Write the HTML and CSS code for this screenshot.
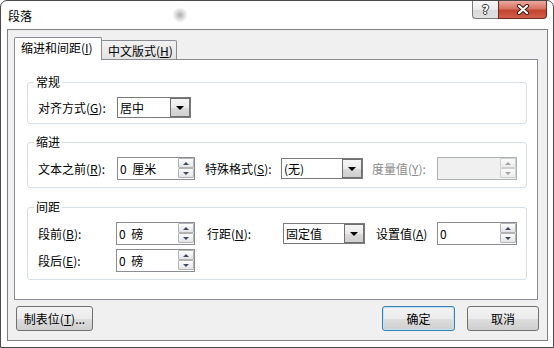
FILE: index.html
```html
<!DOCTYPE html>
<html lang="zh-CN">
<head>
<meta charset="utf-8">
<title>段落</title>
<link rel="stylesheet" href="styles.css">
</head>
<body>
<div class="window">
  <div class="titlebar">
    <span class="title">段落</span>
    <span class="smudge"></span>
    <div class="caption">
      <div class="cbtn help"><span class="qmark">?</span></div>
      <div class="cbtn close">
        <svg width="14" height="11" viewBox="0 0 14 11">
          <path d="M3 2 L11 9 M11 2 L3 9" stroke="#3f1a15" stroke-width="4.2" stroke-linecap="round" fill="none"/>
          <path d="M3 2 L11 9 M11 2 L3 9" stroke="#ffffff" stroke-width="2.2" stroke-linecap="round" fill="none"/>
        </svg>
      </div>
    </div>
  </div>
  <div class="client">
    <div class="tabs">
      <div class="tab sel">缩进和间距(<u>I</u>)</div>
      <div class="tab other">中文版式(<u>H</u>)</div>
    </div>
    <div class="page">
      <fieldset class="group g1">
        <legend>常规</legend>
        <div class="row">
          <span class="lbl w79">对齐方式(<u>G</u>):</span>
          <div class="combo w74"><span class="val">居中</span><span class="drop"><i></i></span></div>
        </div>
      </fieldset>
      <fieldset class="group g2">
        <legend>缩进</legend>
        <div class="row">
          <span class="lbl w79">文本之前(<u>R</u>):</span>
          <div class="spin w78"><span class="val">0 厘米</span><span class="spinbtns"><span class="sb up"><i></i></span><span class="sb down"><i></i></span></span></div>
          <span class="lbl w76 ml10">特殊格式(<u>S</u>):</span>
          <div class="combo w82"><span class="val">(无)</span><span class="drop"><i></i></span></div>
          <span class="lbl w65 ml9 dis">度量值(<u>Y</u>):</span>
          <div class="spin w80 disabled"><span class="val"></span><span class="spinbtns"><span class="sb up"><i></i></span><span class="sb down"><i></i></span></span></div>
        </div>
      </fieldset>
      <fieldset class="group g3">
        <legend>间距</legend>
        <div class="row">
          <span class="lbl w78">段前(<u>B</u>):</span>
          <div class="spin w79"><span class="val">0 磅</span><span class="spinbtns"><span class="sb up"><i></i></span><span class="sb down"><i></i></span></span></div>
          <span class="lbl w76 ml12">行距(<u>N</u>):</span>
          <div class="combo w82"><span class="val">固定值</span><span class="drop"><i></i></span></div>
          <span class="lbl w61 ml11">设置值(<u>A</u>)</span>
          <div class="spin w80"><span class="val">0</span><span class="spinbtns"><span class="sb up"><i></i></span><span class="sb down"><i></i></span></span></div>
        </div>
        <div class="row">
          <span class="lbl w78">段后(<u>E</u>):</span>
          <div class="spin w79"><span class="val">0 磅</span><span class="spinbtns"><span class="sb up"><i></i></span><span class="sb down"><i></i></span></span></div>
        </div>
      </fieldset>
    </div>
    <div class="buttons">
      <button class="btn tabstops">制表位(<u>T</u>)...</button>
      <button class="btn ok">确定</button>
      <button class="btn cancel">取消</button>
    </div>
  </div>
</div>
</body>
</html>
```
FILE: styles.css
```css
* { box-sizing: border-box; }
html, body { margin: 0; padding: 0; }
body {
  width: 554px;
  height: 348px;
  overflow: hidden;
  background: #ffffff;
  font-family: "Noto Sans CJK SC", "Microsoft YaHei", sans-serif;
  font-size: 12px;
  color: #000;
}
u { text-underline-offset: 1px; }

.window {
  width: 554px;
  height: 348px;
  border: 1px solid #4a4a4a;
  border-radius: 7px 7px 0 0;
  background: #ffffff;
  padding: 0 5px 6px 6px;
  display: flex;
  flex-direction: column;
}

.titlebar {
  height: 28px;
  flex: none;
  display: flex;
  align-items: center;
  position: relative;
  padding-left: 1px;
}
.title { line-height: 16px; margin-top: 1px; }
.smudge {
  position: absolute;
  left: 165px;
  top: 6px;
  width: 16px;
  height: 16px;
  border-radius: 50%;
  background: radial-gradient(circle, rgba(105,105,105,0.55) 0, rgba(150,150,150,0.25) 45%, rgba(255,255,255,0) 70%);
}
.caption {
  margin-left: auto;
  margin-right: 1px;
  align-self: flex-start;
  display: flex;
}
.cbtn {
  height: 18px;
  display: flex;
  align-items: center;
  justify-content: center;
}
.help {
  width: 26px;
  border: 1px solid #7b7b7b;
  border-top: none;
  border-right: none;
  border-radius: 0 0 0 4px;
  background: linear-gradient(#f8f8f8, #ececec 50%, #d9d9d9 52%, #e0e0e0);
}
.qmark {
  font-family: "DejaVu Sans", sans-serif;
  font-weight: bold;
  font-size: 12px;
  line-height: 14px;
  color: #fff;
  text-shadow: 1px 0 #333, -1px 0 #333, 0 1px #333, 0 -1px #333;
}
.close {
  width: 49px;
  border: 1px solid #6a2a22;
  border-top: none;
  border-radius: 0 0 4px 0;
  background: linear-gradient(#eaa99f, #d87363 45%, #c4432f 56%, #d2604b);
}

.client {
  flex: 1;
  border: 1px solid #7f7f7f;
  background: #f0f0f0;
  padding: 7px 9px 9px 6px;
  display: flex;
  flex-direction: column;
}

.tabs {
  height: 22px;
  flex: none;
  display: flex;
  align-items: flex-end;
}
.tab {
  border: 1px solid #898c95;
  border-bottom: none;
  border-radius: 2px 2px 0 0;
  padding: 0 0 0 6px;
  white-space: nowrap;
}
.tab.sel {
  width: 88px;
  height: 23px;
  margin-bottom: -1px;
  background: #ffffff;
  line-height: 20px;
  position: relative;
  z-index: 1;
}
.tab.other {
  width: 76px;
  height: 19px;
  margin-left: -1px;
  background: linear-gradient(#f2f2f2, #e3e3e3);
  line-height: 17px;
  padding-top: 1px;
}

.page {
  flex: 1;
  border: 1px solid #898c95;
  background: #ffffff;
  padding: 0 10px 0 12px;
  display: flex;
  flex-direction: column;
}

.group {
  margin: 0;
  min-width: 0;
  border: 1px solid #d5dfe5;
  border-radius: 3px;
  padding: 7px 6px 5px 10px;
}
.group legend {
  padding: 0 2px;
  margin-left: -4px;
  line-height: 16px;
}
.g1 { margin-top: 14px; }
.g2 { margin-top: 10px; padding-bottom: 7px; }
.g3 { margin-top: 11px; padding-bottom: 7px; }

.row { display: flex; align-items: center; }
.row + .row { margin-top: 4px; }
.lbl { white-space: nowrap; line-height: 16px; flex: none; }
.lbl.dis { color: #8a8a8a; }

.w61 { width: 61px; }
.w65 { width: 65px; }
.w74 { width: 74px; }
.w76 { width: 76px; }
.w78 { width: 78px; }
.w79 { width: 79px; }
.w80 { width: 80px; }
.w82 { width: 82px; }
.ml9 { margin-left: 9px; }
.ml10 { margin-left: 10px; }
.ml11 { margin-left: 11px; }
.ml12 { margin-left: 12px; }

.combo {
  flex: none;
  height: 21px;
  display: flex;
  border: 1px solid #7a7a7a;
  background: #ffffff;
}
.combo .val { flex: 1; padding-left: 2px; line-height: 19px; white-space: nowrap; }
.drop {
  width: 20px;
  border: 1px solid #707070;
  background: linear-gradient(#f5f5f5, #ebebeb 50%, #dadada 52%, #cfcfcf);
  display: flex;
  align-items: center;
  justify-content: center;
}
.drop i {
  width: 0;
  height: 0;
  border-left: 4px solid transparent;
  border-right: 4px solid transparent;
  border-top: 4px solid #000;
  margin-top: 1px;
}

.spin {
  flex: none;
  height: 23px;
  display: flex;
  align-items: center;
  border: 1px solid #8a8d92;
  background: #ffffff;
}
.spin .val { flex: 1; padding-left: 2px; line-height: 16px; white-space: nowrap; word-spacing: 3px; }
.spinbtns {
  width: 16px;
  height: 20px;
  margin-bottom: 1px;
  display: flex;
  flex-direction: column;
}
.sb {
  height: 10px;
  border: 1px solid #b3b3b3;
  border-radius: 1px;
  background: linear-gradient(#fdfdfd, #e4e4e4);
  display: flex;
  align-items: center;
  justify-content: center;
}
.sb i { width: 0; height: 0; border-left: 3px solid transparent; border-right: 3px solid transparent; }
.sb.up i { border-bottom: 3px solid #3e4b66; }
.sb.down i { border-top: 3px solid #3e4b66; }
.spin.disabled { background: #f0f0f0; border-color: #adb2b5; }
.spin.disabled .sb { border-color: #cfcfcf; background: linear-gradient(#fafafa, #ececec); }
.spin.disabled .sb.up i { border-bottom-color: #a3a3a3; }
.spin.disabled .sb.down i { border-top-color: #a3a3a3; }

.buttons {
  flex: none;
  height: 25px;
  margin-top: 6px;
  margin-right: -1px;
  padding-left: 2px;
  display: flex;
}
.btn {
  height: 25px;
  padding: 0;
  font-family: inherit;
  font-size: 12px;
  line-height: 16px;
  color: #000;
  border: 1px solid #707070;
  border-radius: 3px;
  background: linear-gradient(#f3f3f3, #ebebeb 50%, #dddddd 52%, #cfcfcf);
  white-space: nowrap;
}
.btn.tabstops { width: 77px; margin-right: auto; }
.btn.ok {
  width: 73px;
  border-color: #3c7fb1;
  box-shadow: inset 0 0 0 1px #bfe3f8;
}
.btn.cancel { width: 72px; margin-left: 12px; }
```
